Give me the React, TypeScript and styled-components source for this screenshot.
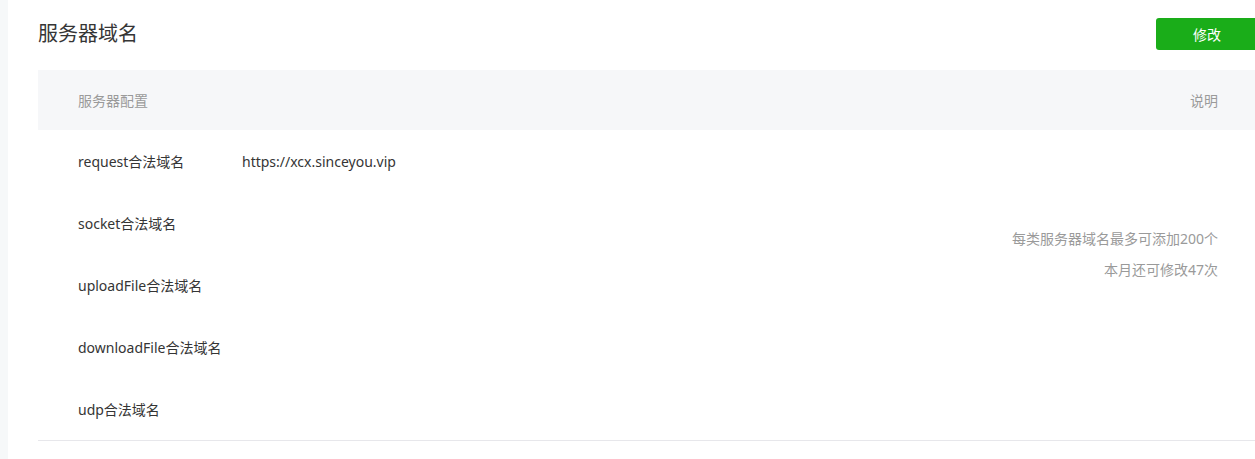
import styled, { createGlobalStyle } from "styled-components";

const GlobalStyle = createGlobalStyle`
  html, body {
    margin: 0;
    padding: 0;
    background: #ffffff;
    overflow: hidden;
  }
  body {
    font-family: "Noto Sans", "Noto Sans CJK SC", sans-serif;
    color: #353535;
  }
`;

const Page = styled.div`
  display: flex;
  min-height: 459px;
`;

const SideStripe = styled.div`
  width: 8px;
  flex-shrink: 0;
  background: #f6f8f9;
`;

const Main = styled.div`
  padding: 18px 0 0 30px;
  width: 1220px;
  flex-shrink: 0;
`;

const TitleBar = styled.div`
  display: flex;
  justify-content: space-between;
  align-items: center;
  height: 32px;
`;

const Title = styled.h2`
  margin: 0;
  font-size: 20px;
  font-weight: 400;
  color: #353535;
  line-height: 32px;
`;

const EditButton = styled.button`
  width: 102px;
  height: 32px;
  border: none;
  border-radius: 3px;
  background: #1aad19;
  color: #ffffff;
  font-family: inherit;
  font-size: 14px;
  cursor: pointer;
`;

const Table = styled.div`
  margin-top: 20px;
  border-bottom: 1px solid #e7e7eb;
`;

const HeadRow = styled.div`
  display: flex;
  justify-content: space-between;
  align-items: center;
  height: 60px;
  padding: 0 40px;
  background: #f6f7f9;
  font-size: 14px;
  color: #9a9a9a;
`;

const Body = styled.div`
  display: flex;
  padding: 0 40px;
`;

const Rows = styled.div`
  flex: 1;
`;

const Row = styled.div`
  display: flex;
  align-items: center;
  height: 62px;
  font-size: 14px;
`;

const Label = styled.div`
  width: 164px;
  flex-shrink: 0;
  color: #353535;
`;

const Value = styled.div`
  color: #353535;
`;

const Notes = styled.div`
  padding-top: 93px;
  text-align: right;
  font-size: 14px;
  color: #9a9a9a;
  line-height: 31px;
`;

const domains = [
  { label: "request合法域名", value: "https://xcx.sinceyou.vip" },
  { label: "socket合法域名", value: "" },
  { label: "uploadFile合法域名", value: "" },
  { label: "downloadFile合法域名", value: "" },
  { label: "udp合法域名", value: "" },
];

const App = () => {
  return (
    <>
      <GlobalStyle />
      <Page>
        <SideStripe />
        <Main>
          <TitleBar>
            <Title>服务器域名</Title>
            <EditButton>修改</EditButton>
          </TitleBar>
          <Table>
            <HeadRow>
              <span>服务器配置</span>
              <span>说明</span>
            </HeadRow>
            <Body>
              <Rows>
                {domains.map((d) => (
                  <Row key={d.label}>
                    <Label>{d.label}</Label>
                    <Value>{d.value}</Value>
                  </Row>
                ))}
              </Rows>
              <Notes>
                <div>每类服务器域名最多可添加200个</div>
                <div>本月还可修改47次</div>
              </Notes>
            </Body>
          </Table>
        </Main>
      </Page>
    </>
  );
};

export default App;
